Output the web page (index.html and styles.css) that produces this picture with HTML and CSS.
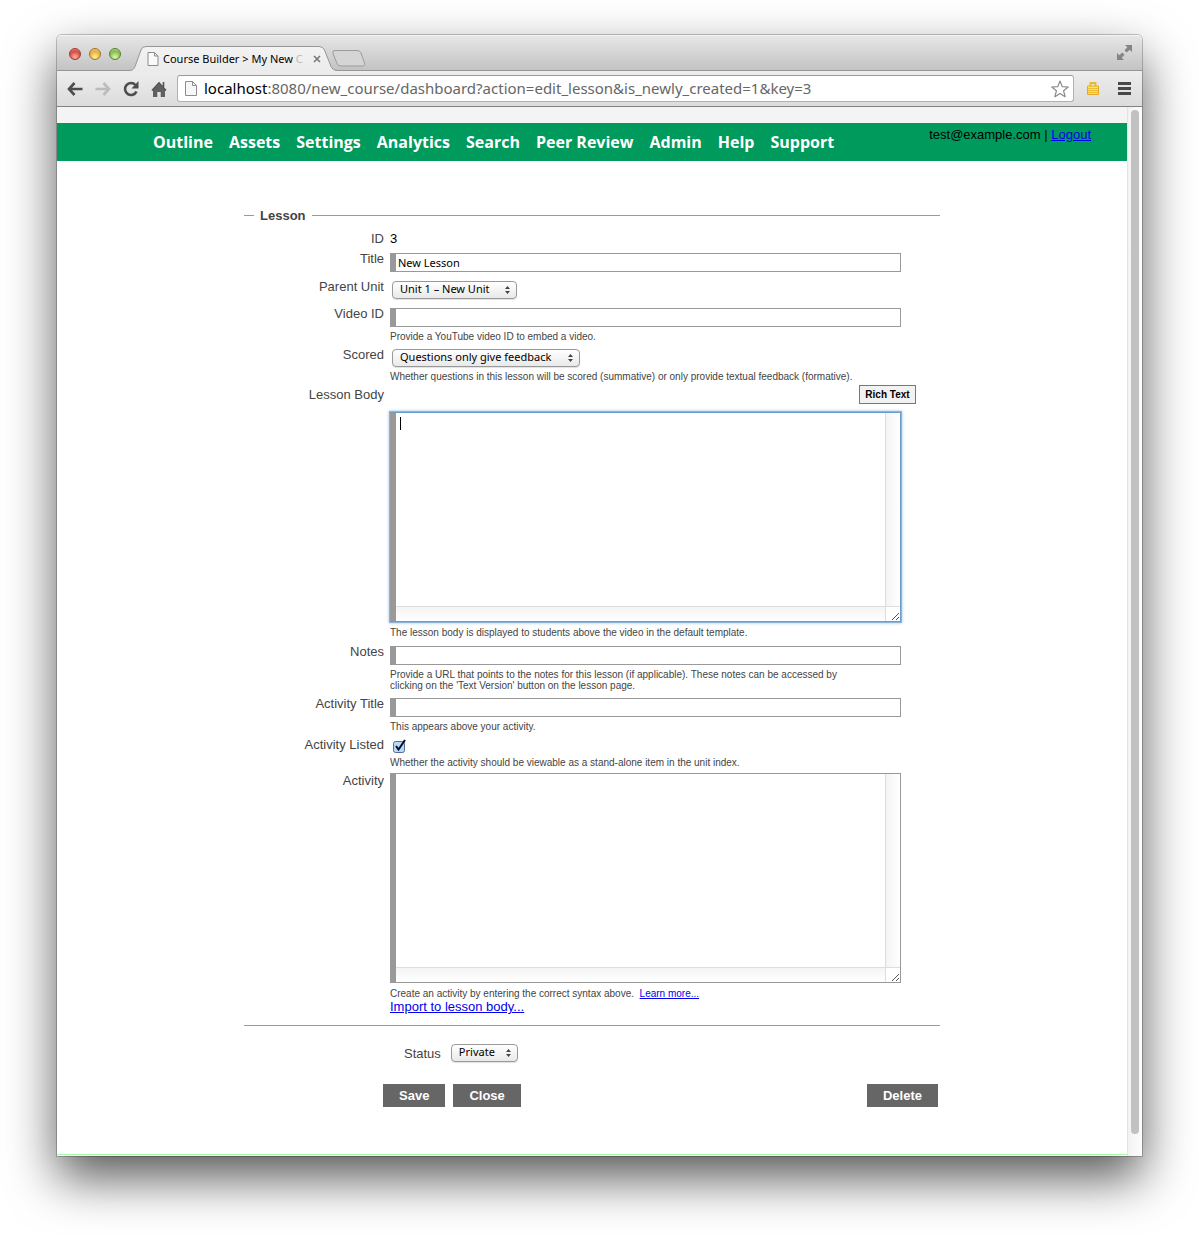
FILE: index.html
```html
<!DOCTYPE html>
<html lang="en">
<head>
<meta charset="utf-8">
<title>Course Builder &gt; My New Course</title>
<link rel="stylesheet" href="styles.css">
</head>
<body>
<div class="window">
  <div class="tabstrip">
    <div class="lights"><span class="light light--red"></span><span class="light light--amber"></span><span class="light light--green"></span></div>
    <div class="tab">
      <svg class="tab-shape" width="208" height="26" viewBox="0 0 208 26"><defs><linearGradient id="tabfill" x2="0" y2="1"><stop offset="0" stop-color="#f3f3f3"/><stop offset="1" stop-color="#ebebeb"/></linearGradient></defs><path d="M0 26V24.500C4 24.500 5 23 6 20.500L12 4Q13 .5 17 .5H190Q194 .5 195.500 4L202 20.500Q203.500 24.500 208 24.500V26Z" fill="url(#tabfill)"/><path d="M0 24.500C4 24.500 5 23 6 20.500L12 4Q13 .5 17 .5H190Q194 .5 195.500 4L202 20.500Q203.500 24.500 208 24.500" fill="none" stroke="#969696"/></svg>
      <svg class="doc" width="12" height="14" viewBox="0 0 12 14"><path d="M1 .5H7.500L11 4V13.500H1ZM7.500 .5V4H11" fill="#fafafa" stroke="#8c8c8c"/></svg>
      <span class="tab-title">Course Builder &gt; My New <span class="fade">C</span></span>
      <svg width="8" height="8" viewBox="0 0 8 8"><path d="M1 1L7 7M7 1L1 7" stroke="#777" stroke-width="1.600"/></svg>
    </div>
    <svg class="newtab" width="34" height="17" viewBox="0 0 34 17"><path d="M3 .5H25Q28 .5 29 3L32.500 13Q33.500 16 30 16H9Q6 16 5 13.500L1 3.500Q0 .5 3 .5Z" fill="#d5d5d5" stroke="#9b9b9b"/></svg>
    <svg class="expand" width="15" height="15" viewBox="0 0 15 15"><path d="M8 0H15V7L12.700 4.700L9.700 7.500L7.500 5.300L10.300 2.300ZM7 15H0V8L2.300 10.300L5.300 7.500L7.500 9.700L4.700 12.700Z" fill="#858585"/></svg>
  </div>
  <div class="toolbar">
    <svg width="16" height="14" viewBox="0 0 16 14"><path d="M7.500 1L2 7L7.500 13M2 7H15.500" fill="none" stroke="#4d4d4d" stroke-width="2.600"/></svg>
    <svg width="16" height="14" viewBox="0 0 16 14"><path d="M8.500 1L14 7L8.500 13M14 7H.5" fill="none" stroke="#bcbcbc" stroke-width="2.600"/></svg>
    <svg width="16" height="16" viewBox="0 0 16 16"><path d="M12.500 4A6 6 0 1 0 13.500 10.500" fill="none" stroke="#4d4d4d" stroke-width="2.600"/><path d="M15.500 0V7.500H8.500Z" fill="#4d4d4d"/></svg>
    <svg width="16" height="16" viewBox="0 0 16 16"><path d="M8 2.800L14 9V16H9.700V11H6.300V16H2V9Z" fill="#606060"/><path d="M1 9.500L8 2L15 9.500M12.500 1V6" fill="none" stroke="#505050" stroke-width="1.600"/></svg>
    <div class="address">
      <svg width="12" height="15" viewBox="0 0 12 15"><path d="M.5 .5H7.500L11.500 4.500V14.500H.5ZM7.500 .5V4.500H11.500" fill="#f7f7f7" stroke="#8c8c8c"/></svg>
      <span class="url"><b>localhost</b>:8080/new_course/dashboard?action=edit_lesson&amp;is_newly_created=1&amp;key=3</span>
      <svg width="18" height="18" viewBox="0 0 18 18"><path d="M9 1L11.200 6.600L17.200 7L12.600 10.800L14.100 16.700L9 13.500L3.900 16.700L5.400 10.800L.8 7L6.800 6.600Z" fill="#fff" stroke="#8a8a8a" stroke-width="1.200" stroke-linejoin="round"/></svg>
    </div>
    <svg class="lock" width="12" height="13" viewBox="0 0 12 13"><path d="M3.500 4V1H8.500V4" fill="none" stroke="#e9b92c" stroke-width="1.800"/><path d="M.5 4H11.500V12.500H.5Z" fill="#fbe94b" stroke="#e8a92a"/><path d="M1 6.500H11M1 8.500H11M1 10.500H11" stroke="#efbd35"/></svg>
    <svg width="13" height="13" viewBox="0 0 13 13"><path d="M0 1.500H13M0 6.500H13M0 11.500H13" stroke="#484848" stroke-width="3"/></svg>
  </div>
  <div class="viewport">
    <div class="page">
      <header class="header">
        <nav class="nav"><a href="#">Outline</a><a href="#">Assets</a><a href="#">Settings</a><a href="#">Analytics</a><a href="#">Search</a><a href="#">Peer Review</a><a href="#">Admin</a><a href="#">Help</a><a href="#">Support</a></nav>
        <div class="user">test@example.com | <a href="#">Logout</a></div>
      </header>
      <form class="form">
        <fieldset class="lesson">
          <legend>Lesson</legend>
          <div class="row row--id"><span class="label">ID</span><div>3</div></div>
          <div class="row"><label class="label" for="title">Title</label><div class="control"><input class="text" id="title" type="text" value="New Lesson"></div></div>
          <div class="row"><label class="label" for="unit">Parent Unit</label><div class="control"><select class="select select--unit" id="unit"><option>Unit 1 – New Unit</option></select></div></div>
          <div class="row row--noted"><label class="label" for="video">Video ID</label><div class="control"><input class="text" id="video" type="text"><p class="note">Provide a YouTube video ID to embed a video.</p></div></div>
          <div class="row row--noted"><label class="label" for="scored">Scored</label><div class="control"><select class="select select--scored" id="scored"><option>Questions only give feedback</option></select><p class="note">Whether questions in this lesson will be scored (summative) or only provide textual feedback (formative).</p></div></div>
          <div class="row row--area"><label class="label" for="body">Lesson Body</label><div class="control">
            <div class="editor-bar"><button class="rich" type="button">Rich Text</button></div>
            <div class="area area--focus"><textarea id="body"></textarea><i class="caret"></i><i class="track track--v"></i><i class="track track--h"></i><svg class="grip" width="14" height="14" viewBox="0 0 14 14"><path d="M6 13L13 6M10 13L13 10" stroke="#555"/></svg></div>
            <p class="note">The lesson body is displayed to students above the video in the default template.</p></div></div>
          <div class="row row--noted"><label class="label" for="notes">Notes</label><div class="control"><input class="text" id="notes" type="text"><p class="note">Provide a URL that points to the notes for this lesson (if applicable). These notes can be accessed by clicking on the 'Text Version' button on the lesson page.</p></div></div>
          <div class="row row--noted"><label class="label" for="acttitle">Activity Title</label><div class="control"><input class="text" id="acttitle" type="text"><p class="note">This appears above your activity.</p></div></div>
          <div class="row row--noted"><label class="label" for="listed">Activity Listed</label><div class="control"><input class="check" id="listed" type="checkbox" checked><p class="note">Whether the activity should be viewable as a stand-alone item in the unit index.</p></div></div>
          <div class="row row--area"><label class="label" for="activity">Activity</label><div class="control">
            <div class="area"><textarea id="activity"></textarea><i class="track track--v"></i><i class="track track--h"></i><svg class="grip" width="14" height="14" viewBox="0 0 14 14"><path d="M6 13L13 6M10 13L13 10" stroke="#555"/></svg></div>
            <p class="note">Create an activity by entering the correct syntax above. &nbsp;<a href="#">Learn more...</a></p>
            <a class="import" href="#">Import to lesson body...</a></div></div>
        </fieldset>
        <div class="status"><label class="label" for="status">Status</label><select class="select select--status" id="status"><option>Private</option></select></div>
        <div class="actions"><button class="button" type="submit">Save</button><button class="button" type="button">Close</button><button class="button button--delete" type="button">Delete</button></div>
      </form>
    </div>
    <div class="scrollbar"><div class="thumb"></div></div>
  </div>
</div>
</body>
</html>
```

FILE: styles.css
```css
* { box-sizing: border-box; }
body {
  margin: 0;
  padding: 35px 57px 79px;
  min-height: 100vh;
  display: flex;
  background: #fff;
  color: #000;
  font: 13px/15px "Liberation Sans", Arial, sans-serif;
}
svg { display: block; flex: none; }

/* Browser window */
.window {
  flex: 1;
  min-width: 0;
  display: flex;
  flex-direction: column;
  background: #fff;
  border-radius: 5px 5px 0 0;
  box-shadow: 0 0 0 1px rgba(0, 0, 0, .22), 0 22px 50px rgba(0, 0, 0, .66);
}
.tabstrip {
  height: 36px;
  display: flex;
  align-items: flex-end;
  border-bottom: 1px solid #969696;
  border-top: 1px solid #f4f4f4;
  border-radius: 5px 5px 0 0;
  background: linear-gradient(#e6e6e6, #c3c3c3);
}
.lights { display: flex; gap: 8px; padding: 0 0 10px 12px; }
.light { width: 12px; height: 12px; border-radius: 50%; border: 1px solid; }
.light--red { background: radial-gradient(circle at 50% 80%, #f9b4a5, #d8493f 60%, #e99c94); border-color: #9b3a33; }
.light--amber { background: radial-gradient(circle at 50% 80%, #fdf0a0, #e5b037 60%, #f4d88e); border-color: #a2702a; }
.light--green { background: radial-gradient(circle at 50% 80%, #dff7b0, #86bb4e 60%, #c4e29b); border-color: #567f34; }
.tab {
  position: relative;
  width: 208px;
  height: 25px;
  margin: 0 0 -1px 8px;
  padding: 0 16px 0 18px;
  display: flex;
  align-items: center;
  gap: 4px;
}
.tab > * { position: relative; }
.tab .tab-shape { position: absolute; left: 0; top: 0; }
.tab-title {
  flex: 1;
  white-space: nowrap;
  font: 11px/16px "Noto Sans", sans-serif;
}
.fade { color: #bbb; }
.newtab { margin: 0 0 3px -5px; }
.expand { margin: 0 10px 10px auto; }
.toolbar {
  height: 36px;
  padding: 0 11px 0 10px;
  display: flex;
  align-items: center;
  gap: 12px;
  border-bottom: 1px solid #828282;
  background: linear-gradient(#ededed, #dcdcdc);
}
.address {
  flex: 1;
  min-width: 0;
  height: 27px;
  margin-left: -2px;
  padding: 0 4px 0 7px;
  display: flex;
  align-items: center;
  gap: 7px;
  border: 1px solid #b0b0b0;
  border-top-color: #999;
  border-radius: 3px;
  background: #fff;
}
.url {
  flex: 1;
  min-width: 0;
  overflow: hidden;
  white-space: nowrap;
  padding-bottom: 2px;
  color: #666;
  font: 15px/20px "Noto Sans", sans-serif;
}
.url b { color: #000; font-weight: 400; }
.lock { margin: 0 7px 0 1px; }

/* Page */
.viewport { flex: 1; display: flex; }
.page { flex: 1; min-width: 0; border-top: 16px solid #f4f4f4; border-bottom: 1px solid #a9f7a9; margin-bottom: 1px; }
.header {
  min-height: 38px;
  padding: 0 36px 0 96px;
  display: flex;
  justify-content: space-between;
  background: #009a5c;
}
.nav { display: flex; align-items: center; gap: 16px; }
.nav a { color: #fff; text-decoration: none; white-space: nowrap; font: 700 16px/22px "Open Sans", sans-serif; }
.user { padding-top: 4px; white-space: nowrap; }
a { color: #00e; }
.scrollbar { width: 15px; padding: 3px 3px 22px; border-left: 1px solid #e3e3e3; background: linear-gradient(90deg, #f2f2f2, #fdfdfd); }
.thumb { width: 8px; height: 100%; border-radius: 4px; background: #c1c1c1; }

/* Form */
.form { max-width: 696px; margin: 47px auto 46px; }
.lesson { margin: 0; padding: 8px 0 5px; border: solid #999; border-width: 1px 0; }
.lesson legend { margin-left: 10px; padding: 0 6px; font-weight: 700; color: #444; }
.row { display: grid; grid-template-columns: 140px minmax(0, 511px); column-gap: 6px; padding-bottom: 7px; }
.row--id { padding-bottom: 5px; }
.row--noted { padding-bottom: 5px; }
.row--area { padding-bottom: 6px; }
.label { color: #444; text-align: right; }
.control { padding-top: 2px; }
.row--area .control { padding-top: 0; }
.text {
  display: block;
  width: 100%;
  height: 19px;
  padding: 0 2px;
  border: 1px solid #999;
  border-left-width: 6px;
  background: #fff;
  font: 11px/15px "Noto Sans", sans-serif;
}
.select {
  appearance: none;
  display: block;
  height: 18px;
  margin: 0 2px;
  padding: 0 7px 2px;
  border: 1px solid #999;
  border-radius: 4px;
  color: #000;
  background: url("data:image/svg+xml,%3Csvg xmlns='http://www.w3.org/2000/svg' width='5' height='8'%3E%3Cpath d='M0 3L2.500 0L5 3ZM0 5L2.500 8L5 5Z' fill='%23444'/%3E%3C/svg%3E") no-repeat right 6px center, linear-gradient(#fff, #f4f4f4 50%, #e9e9e9);
  box-shadow: 0 1px 1px rgba(0, 0, 0, .12);
  font: 11px/14px "Noto Sans", sans-serif;
}
.select--unit { width: 125px; }
.select--scored { width: 188px; }
.select--status { width: 67px; }
.note { max-width: 475px; margin: 4px 0 0; color: #444; font-size: 10px; line-height: 11px; }
.row--area .note { margin-top: 5px; }
.editor-bar { display: flex; justify-content: flex-end; margin: -2px -15px 8px 0; }
.rich { width: 57px; height: 19px; padding: 0; border: 1px solid #777; background: #f2f2f2; font: 700 10px/15px "Liberation Sans", Arial, sans-serif; }
.area {
  position: relative;
  height: 210px;
  display: grid;
  grid-template: 1fr 15px / 1fr 15px;
  border: 1px solid #999;
  border-left-width: 6px;
}
.area--focus { border-color: #6b9dcb; border-left-color: #999; box-shadow: 0 0 0 1px #8db5dc, 0 0 3px 1px #9cc3e8; }
.area textarea { width: 100%; height: 100%; padding: 2px 4px; border: 0; outline: 0; resize: none; overflow: hidden; background: none; font: 11px/15px "Noto Sans", sans-serif; }
.caret { position: absolute; left: 4px; top: 4px; width: 1px; height: 13px; background: #000; }
.track--v { border-left: 1px solid #ddd; background: linear-gradient(90deg, #f4f4f4, #fff); }
.track--h { border-top: 1px solid #ddd; background: linear-gradient(#f4f4f4, #fff); }
.grip { width: 15px; height: 15px; border: solid #ddd; border-width: 1px 0 0 1px; }
.check {
  appearance: none;
  display: block;
  width: 14px;
  height: 14px;
  margin: 0 0 0 3px;
  background: url("data:image/svg+xml,%3Csvg xmlns='http://www.w3.org/2000/svg' width='14' height='14'%3E%3Crect x='.5' y='2.500' width='11' height='11' rx='2' fill='%23b5d9f8' stroke='%23586a9c'/%3E%3Cpath d='M3 7L5.500 10.500L12 1' fill='none' stroke='%23071022' stroke-width='2'/%3E%3C/svg%3E") no-repeat;
}
.import { display: block; width: fit-content; }
.status { display: flex; gap: 8px; align-items: center; padding: 18px 0 0 160px; }
.actions { display: flex; gap: 8px; padding: 22px 2px 0 139px; }
.button { height: 23px; padding: 0 16px; border: 0; background: #666; color: #fff; font: 700 13px/15px "Liberation Sans", Arial, sans-serif; }
.button--delete { margin-left: auto; }
```
